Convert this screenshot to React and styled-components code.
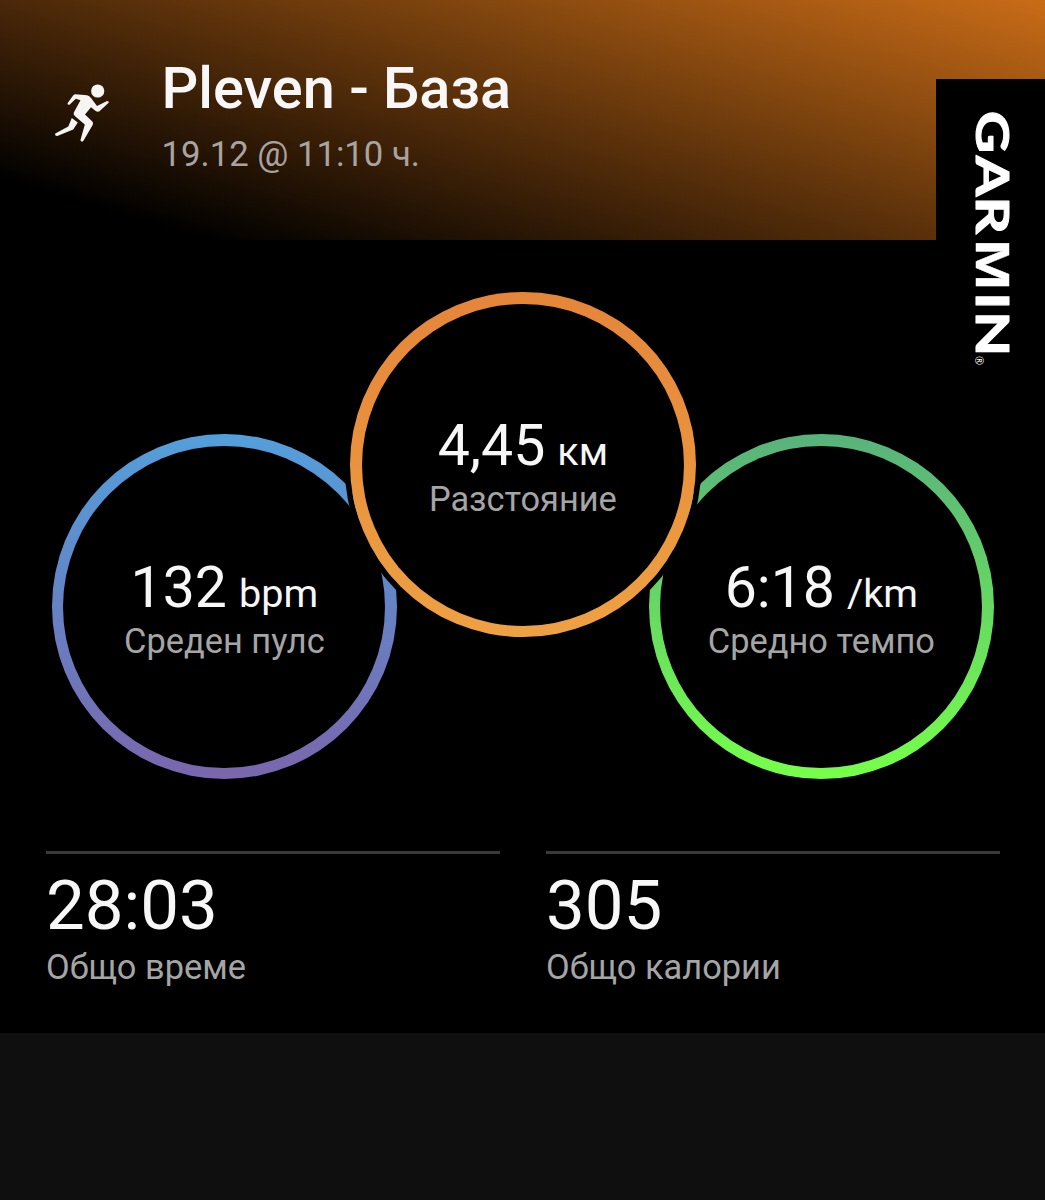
import React from "react";
import styled, { createGlobalStyle } from "styled-components";

const GlobalStyle = createGlobalStyle`
  html, body { margin: 0; background: #0f0f0f; }
  * { box-sizing: border-box; }
`;

const Page = styled.div`
  width: 1045px;
  height: 1200px;
  overflow: hidden;
  background: #0f0f0f;
  font-family: Roboto, "Noto Sans", sans-serif;
  color: #f7f7f7;
`;

const Card = styled.main`
  position: relative;
  height: 1033px;
  background: #000;
`;

const Header = styled.header`
  display: flex;
  height: 240px;
  padding: 60px 0 0 52px;
  background: linear-gradient(16.4deg, #000 11%, #c96c17 100%);
`;

const RunnerIcon = styled.svg`
  width: 60px;
  height: 60px;
  margin-top: 24px;
  fill: #f7f5f4;
`;

const Heading = styled.div`
  margin-left: 49.5px;
`;

const Title = styled.h1`
  margin: 0;
  font-size: 57.7px;
  font-weight: 500;
  line-height: 57px;
`;

const Subtitle = styled.div`
  margin-top: 17px;
  font-size: 34.7px;
  line-height: 40px;
  color: #a9a4a0;
`;

const BrandTab = styled.div`
  position: absolute;
  top: 79px;
  right: 0;
  width: 109px;
  height: 310px;
  background: #000;
`;

const BrandMark = styled.svg`
  display: block;
  width: 109px;
  height: 310px;
  fill: #fff;
  font-family: Lato, sans-serif;
  font-weight: 700;
`;

const Rings = styled.section`
  display: flex;
  align-items: flex-start;
  height: 611px;
  padding: 52px 0 0 51.7px;
`;

const Ring = styled.div`
  flex: none;
  position: relative;
  z-index: ${(p) => (p.$front ? 1 : 0)};
  width: 345.4px;
  height: 345.4px;
  margin-top: ${(p) => (p.$front ? 0 : 142)}px;
  padding: 11.6px;
  border-radius: 50%;
  background: linear-gradient(${(p) => p.$from}, ${(p) => p.$to});
  box-shadow: 0 0 0 ${(p) => (p.$front ? 5.6 : 0)}px #000;

  & + & { margin-left: -46.9px; }
`;

const Core = styled.div`
  display: flex;
  flex-direction: column;
  align-items: center;
  height: 100%;
  padding-top: 108px;
  border-radius: 50%;
  background: #000;
`;

const Value = styled.div`
  font-size: 57.2px;
  line-height: 68px;
  margin-bottom: -7px;
  white-space: nowrap;
`;

const Unit = styled.span`
  margin-left: 12px;
  font-size: 39.6px;
`;

const Label = styled.div`
  font-size: 34.4px;
  line-height: 40px;
  color: #a5a5a5;
  white-space: nowrap;
`;

const Totals = styled.section`
  display: grid;
  grid-template-columns: 454px 454px;
  column-gap: 46px;
  padding-left: 46px;
`;

const Total = styled.div`
  padding-top: 11px;
  border-top: 3px solid #3a3a3a;
`;

const TotalValue = styled.div`
  font-size: 69px;
  line-height: 81px;
  margin-bottom: 1px;
`;

const rings = [
  { value: "132", unit: "bpm", label: "Среден пулс", from: "#539fdb", to: "#7a66ad" },
  { value: "4,45", unit: "км", label: "Разстояние", from: "#e5853a", to: "#eea142", front: true },
  { value: "6:18", unit: "/km", label: "Средно темпо", from: "#58b27c", to: "#76ff4a" },
];

const totals = [
  { value: "28:03", label: "Общо време" },
  { value: "305", label: "Общо калории" },
];

function Runner() {
  return (
    <RunnerIcon viewBox="52 84 60 60" aria-hidden="true">
      <circle cx="97.7" cy="91" r="6.6" />
      <path d="M75.5 94.2 L87 95.2 Q89.5 95.7 91 98 L97 106 L107 101 Q109.3 101 108.6 102.8 L99.5 111.3 Q97.5 112.4 95.7 111 L91 107.2 L85 114.5 L92.3 121.4 Q93.5 122.8 92.8 124.8 L83.3 141 Q81.5 142.6 80.4 140.3 L84.8 124.5 L74.8 116 Q73.2 114.5 73.8 112.4 L80.5 100.2 L75.8 98.8 L69.8 104.6 Q67.5 105.3 67.5 103.2 L73.3 95.3 Q74.2 94.2 75.5 94.2 Z" />
      <path d="M71.8 118 L77.8 122.5 L73.2 129.5 L57.3 136 Q54.3 135.8 55.3 133.4 L68.3 126.5 Z" />
    </RunnerIcon>
  );
}

function Brand() {
  return (
    <BrandTab>
      <BrandMark viewBox="0 0 109 310">
        <g transform="translate(39.5 33) rotate(90)">
          <text transform="scale(1.26 1)" x="-1 34.7 67.1 100.9 143.1 158.1" y="0" fontSize="46.5" stroke="#fff" strokeWidth="1" strokeLinejoin="round">
            GAR<tspan fontFamily="Liberation Sans" fontSize="48.5" strokeWidth="0.4">M</tspan>IN
          </text>
          <text x="244" y="1" fontSize="11" fontWeight="400">®</text>
        </g>
      </BrandMark>
    </BrandTab>
  );
}

export default function App() {
  return (
    <Page>
      <GlobalStyle />
      <Card>
        <Header>
          <Runner />
          <Heading>
            <Title>Pleven - База</Title>
            <Subtitle>19.12 @ 11:10 ч.</Subtitle>
          </Heading>
        </Header>
        <Brand />
        <Rings>
          {rings.map((r) => (
            <Ring key={r.label} $from={r.from} $to={r.to} $front={r.front}>
              <Core>
                <Value>
                  {r.value}
                  <Unit>{r.unit}</Unit>
                </Value>
                <Label>{r.label}</Label>
              </Core>
            </Ring>
          ))}
        </Rings>
        <Totals>
          {totals.map((t) => (
            <Total key={t.label}>
              <TotalValue>{t.value}</TotalValue>
              <Label>{t.label}</Label>
            </Total>
          ))}
        </Totals>
      </Card>
    </Page>
  );
}
